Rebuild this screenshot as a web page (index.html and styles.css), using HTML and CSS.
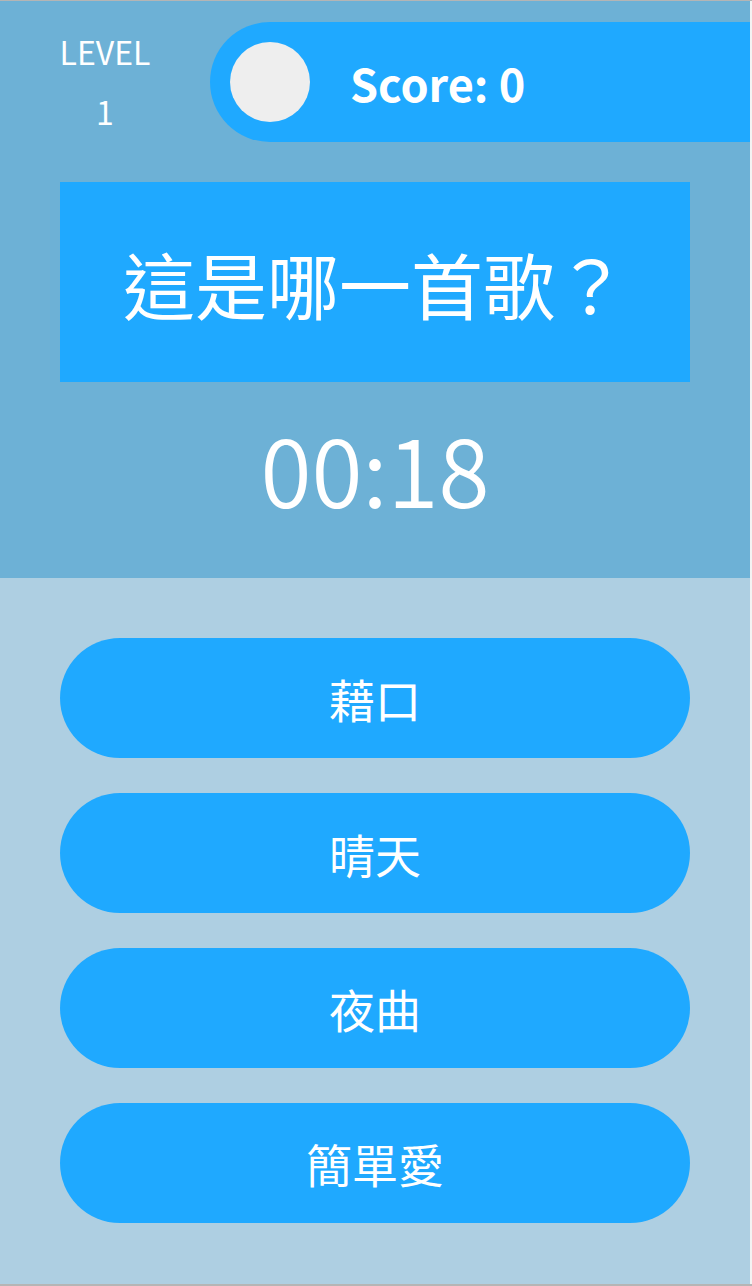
FILE: index.html
```html
<!DOCTYPE html>
<html lang="zh-Hant">
<head>
<meta charset="utf-8">
<title>Quiz</title>
<link rel="stylesheet" href="styles.css">
</head>
<body>
<div class="app">
  <section class="top">
    <div class="header">
      <div class="level">
        <div class="level-label">LEVEL</div>
        <div class="level-num">1</div>
      </div>
      <div class="score-pill">
        <div class="avatar"></div>
        <div class="score">Score: 0</div>
      </div>
    </div>
    <div class="question">這是哪一首歌？</div>
    <div class="timer">00:18</div>
  </section>
  <section class="answers">
    <button class="answer">藉口</button>
    <button class="answer">晴天</button>
    <button class="answer">夜曲</button>
    <button class="answer">簡單愛</button>
  </section>
</div>
</body>
</html>
```
FILE: styles.css
```css
html, body {
  margin: 0;
  padding: 0;
}
body {
  background: #f3f3f3;
  border-top: 1px solid #b5b5b5;
  border-bottom: 2px solid #b5b5b5;
  font-family: "Noto Sans CJK TC", "Noto Sans", sans-serif;
  color: #ffffff;
}
.app {
  width: 750px;
  height: 1283px;
  display: flex;
  flex-direction: column;
}
.top {
  height: 577px;
  background: #6db1d6;
  display: flex;
  flex-direction: column;
  flex: none;
}
.header {
  display: flex;
  align-items: flex-start;
  padding-top: 21px;
}
.level {
  width: 210px;
  flex: none;
  text-align: center;
  font-size: 32px;
  line-height: 60px;
  margin-top: -1px;
}
.score-pill {
  flex: 1;
  height: 120px;
  background: #1fa9ff;
  border-radius: 60px 0 0 60px;
  display: flex;
  align-items: center;
}
.avatar {
  width: 80px;
  height: 80px;
  border-radius: 50%;
  background: #eeeeee;
  margin-left: 20px;
  flex: none;
}
.score {
  margin-left: 40px;
  font-size: 45px;
  font-weight: 700;
}
.question {
  margin: 40px 60px 0;
  height: 200px;
  background: #1fa9ff;
  display: flex;
  align-items: center;
  justify-content: center;
  font-size: 72px;
}
.timer {
  text-align: center;
  font-size: 93px;
  font-weight: 350;
  margin-top: 39px;
  line-height: 1;
}
.answers {
  flex: 1;
  background: #aecfe2;
  display: flex;
  flex-direction: column;
  gap: 35px;
  padding: 60px 60px 0;
}
.answer {
  height: 120px;
  border: none;
  border-radius: 60px;
  background: #1fa9ff;
  color: #ffffff;
  font-family: "Noto Sans CJK TC", "Noto Sans", sans-serif;
  font-size: 46px;
  padding: 0;
  flex: none;
}
```
